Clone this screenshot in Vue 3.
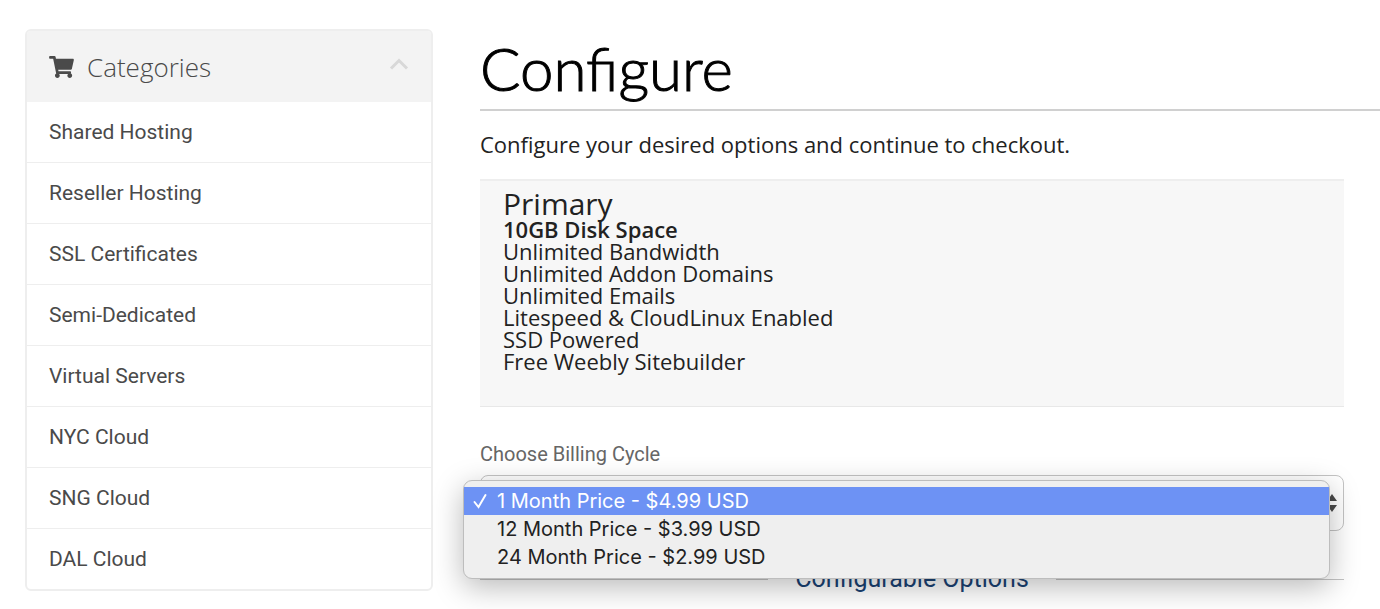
<script setup>
import { ref } from 'vue'

const categories = [
  'Shared Hosting',
  'Reseller Hosting',
  'SSL Certificates',
  'Semi-Dedicated',
  'Virtual Servers',
  'NYC Cloud',
  'SNG Cloud',
  'DAL Cloud',
]

const features = [
  'Unlimited Bandwidth',
  'Unlimited Addon Domains',
  'Unlimited Emails',
  'Litespeed & CloudLinux Enabled',
  'SSD Powered',
  'Free Weebly Sitebuilder',
]

const cycles = [
  { value: 'monthly', label: '1 Month Price - $4.99 USD' },
  { value: 'annually', label: '12 Month Price - $3.99 USD' },
  { value: 'biennially', label: '24 Month Price - $2.99 USD' },
]

const expanded = ref(true)
const menuOpen = ref(true)
const cycle = ref('monthly')

function choose(value) {
  cycle.value = value
  menuOpen.value = false
}
</script>

<template>
  <div class="page">
    <aside class="sidebar">
      <nav class="panel" aria-label="Categories">
        <button class="panel-head" type="button" :aria-expanded="expanded" @click="expanded = !expanded">
          <svg class="cart" viewBox="0 0 576 512" aria-hidden="true">
            <path d="M528.12 301.319l47.273-208C578.806 78.301 567.391 64 551.99 64H159.208l-9.166-44.81C147.758 8.021 137.93 0 126.529 0H24C10.745 0 0 10.745 0 24v16c0 13.255 10.745 24 24 24h69.883l70.248 343.435C147.325 417.1 136 435.222 136 456c0 30.928 25.072 56 56 56s56-25.072 56-56c0-15.674-6.447-29.835-16.824-40h209.647C430.447 426.165 424 440.326 424 456c0 30.928 25.072 56 56 56s56-25.072 56-56c0-22.172-12.888-41.332-31.579-50.405l5.517-24.276c3.413-15.018-8.002-29.319-23.403-29.319H218.117l-6.545-32h293.145c11.206 0 20.92-7.754 23.403-18.681z" />
          </svg>
          <span class="panel-title">Categories</span>
          <svg class="chevron" viewBox="0 0 20 12" aria-hidden="true">
            <path d="M2 10.500 10 2.500l8 8" />
          </svg>
        </button>
        <ul v-show="expanded" class="links">
          <li v-for="name in categories" :key="name">
            <a href="#">{{ name }}</a>
          </li>
        </ul>
      </nav>
    </aside>

    <main class="main">
      <h1>Configure</h1>
      <div class="content">
        <p class="intro">Configure your desired options and continue to checkout.</p>

        <section class="product">
          <h2>Primary</h2>
          <ul>
            <li><strong>10GB Disk Space</strong></li>
            <li v-for="item in features" :key="item">{{ item }}</li>
          </ul>
        </section>

        <label class="cycle-label" for="cycle">Choose Billing Cycle</label>
        <div class="cycle">
          <select id="cycle" v-model="cycle" @mousedown.prevent="menuOpen = !menuOpen">
            <option v-for="c in cycles" :key="c.value" :value="c.value">{{ c.label }}</option>
          </select>
          <svg class="arrows" viewBox="0 0 10 18" aria-hidden="true">
            <path d="M5 0l5 7H0zM5 18l5-7H0z" />
          </svg>
          <div v-if="menuOpen" class="menu" role="listbox" aria-label="Billing cycle">
            <button
              v-for="c in cycles"
              :key="c.value"
              type="button"
              role="option"
              class="option"
              :class="{ selected: c.value === cycle }"
              :aria-selected="c.value === cycle"
              @click="choose(c.value)"
            >
              <svg class="check" viewBox="0 0 14 16" aria-hidden="true">
                <path v-if="c.value === cycle" d="M1.500 9l4 5L12.500 2" />
              </svg>
              <span>{{ c.label }}</span>
            </button>
          </div>
        </div>

        <h3 class="divider"><span>Configurable Options</span></h3>
      </div>
    </main>
  </div>
</template>

<style>
body {
  margin: 0;
  background: #fff;
}
</style>

<style scoped>
.page {
  box-sizing: border-box;
  display: flex;
  align-items: flex-start;
  gap: 47px;
  min-height: 100vh;
  padding: 29px 0 0 25px;
  font-family: "Open Sans", "Noto Sans", sans-serif;
  color: #222;
}

ul {
  list-style: none;
  margin: 0;
  padding: 0;
}

.sidebar {
  flex: 0 0 408px;
}

.panel {
  border: 2px solid #eee;
  border-radius: 6px;
  overflow: hidden;
}

.panel-head {
  display: flex;
  align-items: center;
  width: 100%;
  height: 71px;
  padding: 0 22px;
  border: 0;
  background: #f3f3f3;
  color: #4a4a4a;
  font: 300 26px/36px "Open Sans", sans-serif;
  text-align: left;
}

.cart {
  width: 25px;
  height: 22px;
  margin-right: 13px;
  fill: #4a4a4a;
}

.panel-title {
  flex: 1;
}

.chevron {
  width: 20px;
  height: 12px;
  margin-bottom: 6px;
  fill: none;
  stroke: #d8d8d8;
  stroke-width: 3;
}

.links li + li {
  border-top: 1px solid #eee;
}

.links a {
  display: block;
  padding: 15px 22px;
  color: #4a4a4a;
  font: 400 21px/30px Roboto, sans-serif;
  text-decoration: none;
}

.main {
  flex: 1;
  min-width: 0;
}

h1 {
  margin: 0;
  height: 80px;
  border-bottom: 2px solid #d0d0d0;
  color: #000;
  font: 300 60px/78px Lato, sans-serif;
  -webkit-text-stroke: 1px #000;
}

.content {
  margin-right: 36px;
}

.intro {
  margin: 0;
  padding: 17px 0 19px;
  font-size: 22px;
  line-height: 32px;
}

.product {
  padding: 8px 23px 34px;
  border-top: 2px solid #eee;
  border-bottom: 1px solid #e8e8e8;
  background: #f7f7f7;
  font-size: 22px;
  line-height: 22px;
}

.product h2 {
  margin: 0;
  font-size: 30px;
  font-weight: 400;
  line-height: 29px;
}

.product strong {
  font-weight: 600;
}

.cycle-label {
  display: block;
  padding: 33px 0 7px;
  color: #666;
  font: 400 20px/28px Roboto, sans-serif;
}

.cycle {
  position: relative;
}

select {
  display: block;
  width: 100%;
  height: 56px;
  padding: 0 24px;
  border: 1px solid #c4c4c4;
  border-radius: 8px;
  background: #fff;
  color: #555;
  font: 400 20px/28px Roboto, sans-serif;
  appearance: none;
}

.arrows {
  position: absolute;
  top: 19px;
  right: 7px;
  width: 10px;
  height: 18px;
  fill: #4a4a4a;
}

.menu {
  position: absolute;
  z-index: 1;
  top: 5px;
  left: -17px;
  right: 14px;
  padding: 6px 0 7px;
  border: 1px solid #bdbdbd;
  border-radius: 9px;
  background: #efefef;
  box-shadow: 0 8px 30px rgba(0, 0, 0, 0.28);
}

.option {
  display: flex;
  align-items: center;
  width: 100%;
  height: 28px;
  padding: 0 9px;
  border: 0;
  background: none;
  color: #222;
  font: 400 20px/28px Inter, sans-serif;
  text-align: left;
}

.option.selected {
  background: #6d92f4;
  color: #fff;
}

.check {
  width: 14px;
  height: 16px;
  margin-right: 10px;
  fill: none;
  stroke: currentColor;
  stroke-width: 2;
  stroke-linecap: round;
}

.divider {
  display: flex;
  align-items: center;
  margin: 31px 0 0;
  color: #1a4274;
  font: 400 25px/34px Roboto, sans-serif;
}

.divider::before,
.divider::after {
  content: "";
  flex: 1;
  border-top: 1px solid #c4c4c4;
}

.divider span {
  padding: 0 27px;
}
</style>
